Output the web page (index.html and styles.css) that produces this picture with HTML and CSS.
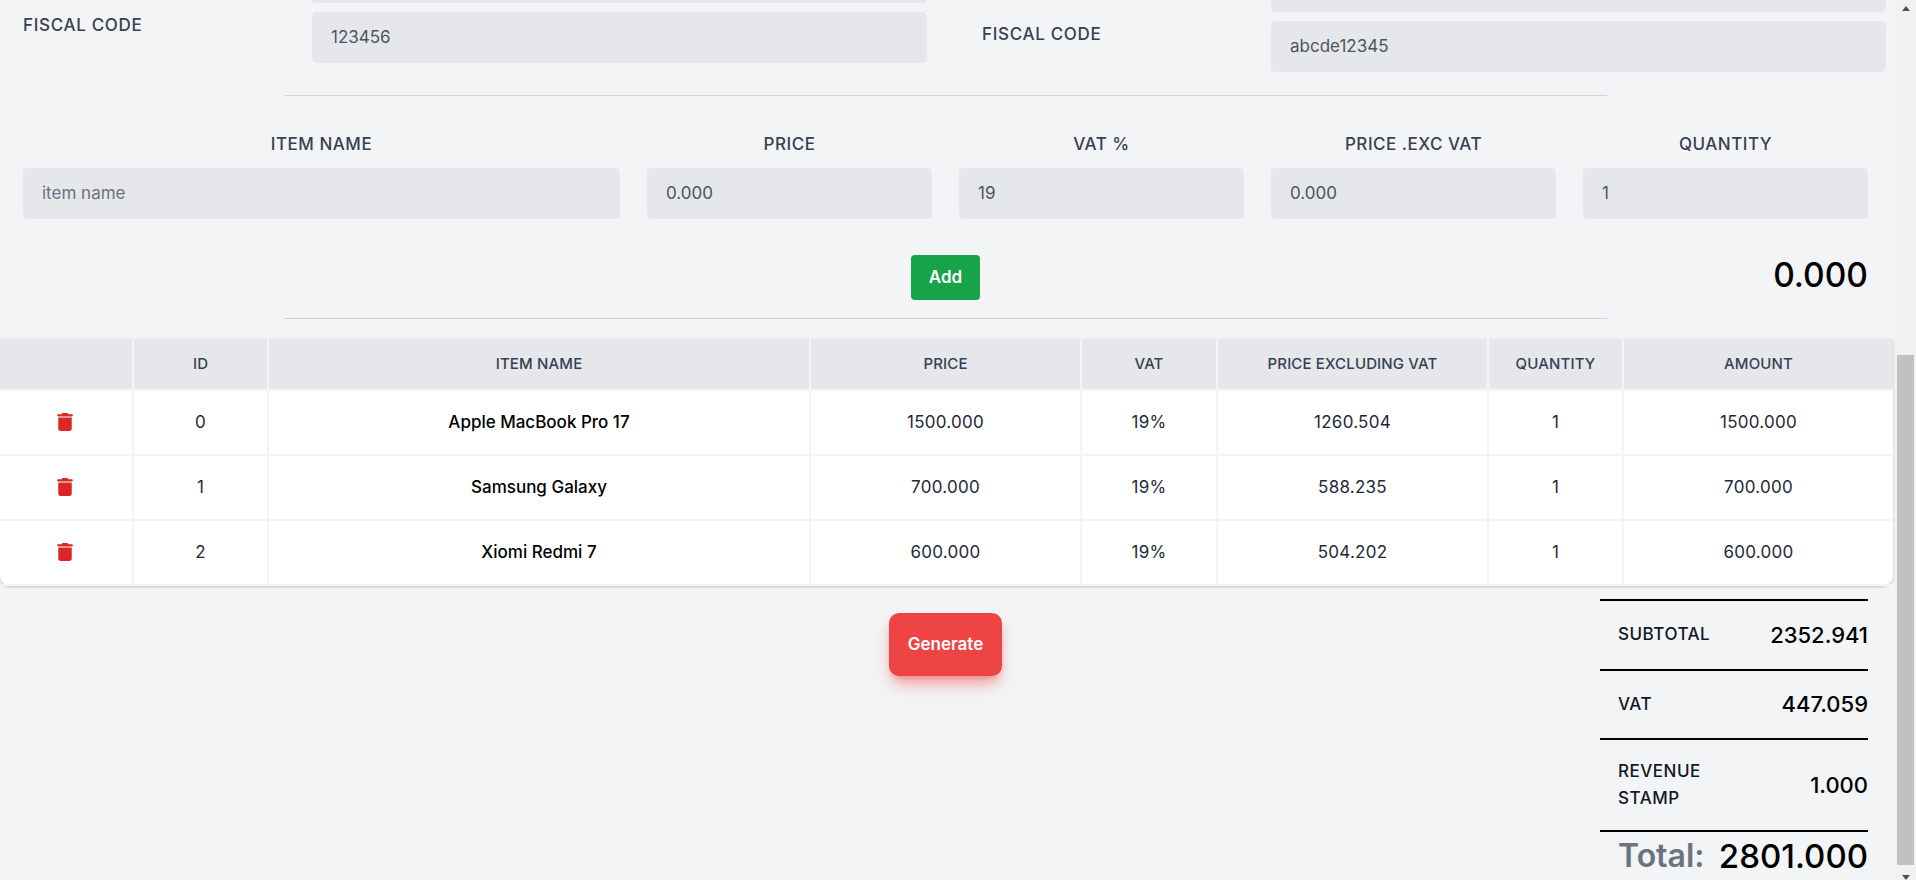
FILE: index.html
```html
<!DOCTYPE html>
<html lang="en">
<head>
<meta charset="utf-8">
<title>Invoice</title>
<link rel="stylesheet" href="styles.css">
</head>
<body>
<div class="shell">
  <main class="page">
    <section class="parties">
      <div class="party party-left">
        <div class="sliver sliver-left"></div>
        <div class="field-row">
          <label class="field-label">FISCAL CODE</label>
          <div class="input">123456</div>
        </div>
      </div>
      <div class="party party-right">
        <div class="sliver sliver-right"></div>
        <div class="field-row">
          <label class="field-label">FISCAL CODE</label>
          <div class="input">abcde12345</div>
        </div>
      </div>
    </section>
    <div class="rule rule-first"></div>
    <section class="item-form">
      <div class="item-col span-2"><label class="col-label">ITEM NAME</label><div class="input placeholder">item name</div></div>
      <div class="item-col"><label class="col-label">PRICE</label><div class="input">0.000</div></div>
      <div class="item-col"><label class="col-label">VAT %</label><div class="input">19</div></div>
      <div class="item-col"><label class="col-label">PRICE .EXC VAT</label><div class="input">0.000</div></div>
      <div class="item-col"><label class="col-label">QUANTITY</label><div class="input">1</div></div>
    </section>
    <section class="add-row">
      <button class="btn-add">Add</button>
      <div class="line-total">0.000</div>
    </section>
    <div class="rule rule-second"></div>
    <table class="items">
      <colgroup>
        <col class="c-action"><col class="c-id"><col class="c-name"><col class="c-price"><col class="c-vat"><col class="c-exc"><col class="c-qty"><col class="c-amount">
      </colgroup>
      <thead>
        <tr><th></th><th>ID</th><th>ITEM NAME</th><th>PRICE</th><th>VAT</th><th>PRICE EXCLUDING VAT</th><th>QUANTITY</th><th>AMOUNT</th></tr>
      </thead>
      <tbody>
        <tr>
          <td><svg class="trash" viewBox="0 0 448 512"><path d="M135.2 17.7C140.6 6.8 151.700 0 163.800 0h120.400c12.100 0 23.200 6.800 28.600 17.700L320 32h96c17.700 0 32 14.300 32 32s-14.300 32-32 32H32C14.300 96 0 81.700 0 64s14.300-32 32-32h96l7.200-14.300zM32 128h384v320c0 35.300-28.700 64-64 64H96c-35.300 0-64-28.700-64-64V128z"/></svg></td>
          <td>0</td><td class="name">Apple MacBook Pro 17</td><td>1500.000</td><td>19%</td><td>1260.504</td><td>1</td><td>1500.000</td>
        </tr>
        <tr>
          <td><svg class="trash" viewBox="0 0 448 512"><path d="M135.2 17.7C140.6 6.8 151.700 0 163.800 0h120.400c12.100 0 23.200 6.800 28.600 17.700L320 32h96c17.700 0 32 14.300 32 32s-14.300 32-32 32H32C14.300 96 0 81.700 0 64s14.300-32 32-32h96l7.200-14.300zM32 128h384v320c0 35.300-28.700 64-64 64H96c-35.300 0-64-28.700-64-64V128z"/></svg></td>
          <td>1</td><td class="name">Samsung Galaxy</td><td>700.000</td><td>19%</td><td>588.235</td><td>1</td><td>700.000</td>
        </tr>
        <tr>
          <td><svg class="trash" viewBox="0 0 448 512"><path d="M135.2 17.7C140.6 6.8 151.700 0 163.800 0h120.400c12.100 0 23.200 6.800 28.600 17.700L320 32h96c17.700 0 32 14.300 32 32s-14.300 32-32 32H32C14.300 96 0 81.700 0 64s14.300-32 32-32h96l7.200-14.300zM32 128h384v320c0 35.300-28.700 64-64 64H96c-35.300 0-64-28.700-64-64V128z"/></svg></td>
          <td>2</td><td class="name">Xiomi Redmi 7</td><td>600.000</td><td>19%</td><td>504.202</td><td>1</td><td>600.000</td>
        </tr>
      </tbody>
    </table>
    <section class="bottom">
      <button class="btn-generate">Generate</button>
      <div class="totals">
        <div class="total-row"><span class="total-label">SUBTOTAL</span><span class="total-value">2352.941</span></div>
        <div class="total-row"><span class="total-label">VAT</span><span class="total-value">447.059</span></div>
        <div class="total-row tall"><span class="total-label">REVENUE<br>STAMP</span><span class="total-value">1.000</span></div>
        <div class="grand-row"><span class="grand-label">Total:</span><span class="grand-value">2801.000</span></div>
      </div>
    </section>
  </main>
  <aside class="scrollbar">
    <div class="track-top"><div class="arrow-up"></div></div>
    <div class="thumb"></div>
    <div class="track-bottom"><div class="arrow-down"></div></div>
  </aside>
</div>
</body>
</html>
```
FILE: styles.css
```css
* { box-sizing: border-box; }
html, body { margin: 0; height: 880px; overflow: hidden; }
body { background: #f3f4f6; font-family: Inter, "Liberation Sans", sans-serif; color: #374151; font-size: 17px; }
.shell { display: flex; height: 880px; }
.page { width: 1895px; height: 880px; overflow: hidden; flex: none; }

.parties { display: grid; grid-template-columns: 904px 904px; column-gap: 55px; padding-left: 23px; height: 72px; }
.party { display: flex; flex-direction: column; gap: 9px; }
.sliver { background: #e5e7eb; margin-left: 289px; border-radius: 0 0 5px 5px; }
.sliver-left { height: 3px; }
.sliver-right { height: 12px; }
.field-row { display: flex; }
.field-label { width: 289px; flex: none; line-height: 24px; padding-top: 1px; font-weight: 500; letter-spacing: .04em; }
.input { flex: 1; height: 51px; background: #e5e7eb; border-radius: 5px; padding: 0 19px 2px; display: flex; align-items: center; color: #4b5563; font-size: 17px; }
.placeholder { color: #6b7280; }

.rule { width: 1323px; height: 1px; background: #d1d5db; margin-left: 284px; }
.rule-first { margin-top: 23px; }
.rule-second { margin-top: 18px; }

.item-form { width: 1891px; padding: 0 23px; margin-top: 36px; display: grid; grid-template-columns: repeat(6, 1fr); column-gap: 27px; }
.span-2 { grid-column: span 2; }
.item-col { display: flex; flex-direction: column; gap: 12px; }
.item-col .input { flex: none; }
.col-label { text-align: center; line-height: 24px; font-weight: 500; letter-spacing: .03em; }

.add-row { width: 1891px; padding: 0 23px; margin-top: 36px; display: grid; grid-template-columns: 1fr auto 1fr; align-items: center; }
.btn-add { grid-column: 2; width: 69px; height: 45px; padding: 0 0 2px; background: #16a34a; border: 0; border-radius: 4px; color: #fff; font: 600 17px Inter, sans-serif; }
.line-total { justify-self: end; font-size: 33.5px; line-height: 40px; font-weight: 500; color: #000; margin-top: -5px; }

.items { width: 1893px; margin-top: 20px; border-collapse: collapse; table-layout: fixed; background: #fff; border-radius: 0 0 10px 10px; box-shadow: 0 1px 3px rgba(0,0,0,.2); }
.c-action { width: 133px; }
.c-id { width: 135px; }
.c-name { width: 542px; }
.c-price { width: 271px; }
.c-vat { width: 136px; }
.c-exc { width: 271px; }
.c-qty { width: 135px; }
.c-amount { width: 270px; }
.items th { height: 51px; padding-bottom: 3px; background: #e5e7eb; border: 2px solid #f3f4f6; border-top: 0; font-size: 15px; font-weight: 500; color: #374151; letter-spacing: .01em; }
.items td { height: 65px; border: 2px solid #f3f4f6; text-align: center; color: #1f2937; font-size: 17px; letter-spacing: .015em; padding-bottom: 2px; }
.items th:first-child, .items td:first-child { border-left: 0; }
.items th:last-child, .items td:last-child { border-right: 0; }
.items td.name { color: #000; font-weight: 500; letter-spacing: 0; }
.trash { width: 16px; height: 18px; fill: #dc2626; display: inline-block; vertical-align: middle; margin: 0 3px 2px 0; }

.bottom { width: 1891px; padding: 0 23px; display: grid; grid-template-columns: 1fr auto 1fr; align-items: start; }
.btn-generate { grid-column: 2; margin-top: 27px; width: 113px; height: 63px; padding: 0 0 2px; background: #ef4444; border: 0; border-radius: 10px; color: #fff; font: 600 17px Inter, sans-serif; box-shadow: 0 10px 15px -3px rgba(239,68,68,.5), 0 4px 6px -4px rgba(239,68,68,.5); }
.totals { justify-self: end; width: 268px; margin-top: 13px; }
.total-row { display: flex; align-items: center; justify-content: space-between; border-top: 2px solid #000; height: 69.5px; padding-left: 18px; }
.tall { height: 92px; }
.total-label { font-size: 17px; line-height: 27px; font-weight: 500; color: #111827; letter-spacing: .03em; }
.total-value { font-size: 22px; font-weight: 500; color: #000; }
.grand-row { display: flex; justify-content: space-between; align-items: center; border-top: 2px solid #000; padding: 0 0 0 18px; height: 49px; }
.grand-label { font-size: 32px; font-weight: 600; color: #6b7280; }
.grand-value { font-size: 33px; font-weight: 500; color: #000; }

.scrollbar { flex: 1; background: #f1f1f1; display: flex; flex-direction: column; padding-right: 2px; padding-left: 2px; }
.track-top { height: 356px; padding-top: 6px; }
.arrow-up { width: 0; height: 0; margin: 0 auto; border: solid transparent; border-width: 0 4.5px 5px; border-bottom-color: #505050; }
.thumb { height: 511px; background: #c1c1c1; }
.track-bottom { flex: 1; padding-top: 10px; }
.arrow-down { width: 0; height: 0; margin: 0 auto; border: solid transparent; border-width: 5px 4.5px 0; border-top-color: #505050; }
```
